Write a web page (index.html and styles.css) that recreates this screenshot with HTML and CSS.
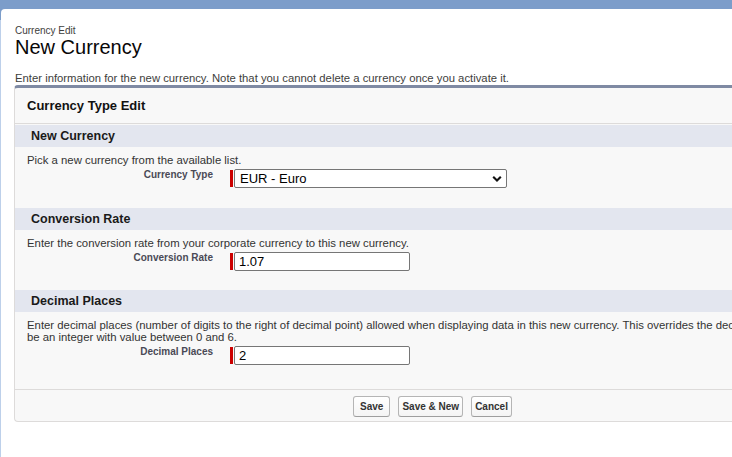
FILE: index.html
```html
<!DOCTYPE html>
<html lang="en">
<head>
<meta charset="utf-8">
<title>New Currency</title>
<link rel="stylesheet" href="styles.css">
</head>
<body>
<div class="panel">
  <div class="page-head">
    <div class="crumb">Currency Edit</div>
    <h1 class="title">New Currency</h1>
  </div>
  <p class="intro">Enter information for the new currency. Note that you cannot delete a currency once you activate it.</p>
  <div class="block">
    <div class="block-head">Currency Type Edit</div>

    <div class="sec-head">New Currency</div>
    <div class="sec-body">
      <div class="sec-text">Pick a new currency from the available list.</div>
      <div class="row">
        <div class="label">Currency Type</div>
        <div class="field">
          <span class="req"></span>
          <div class="select">
            <span class="select-val">EUR - Euro</span>
            <svg class="chev" width="10" height="8" viewBox="0 0 10 8"><path d="M1.2 1.8 L5 5.6 L8.8 1.8" fill="none" stroke="#111" stroke-width="2.1"/></svg>
          </div>
        </div>
      </div>
    </div>

    <div class="sec-head">Conversion Rate</div>
    <div class="sec-body">
      <div class="sec-text">Enter the conversion rate from your corporate currency to this new currency.</div>
      <div class="row">
        <div class="label">Conversion Rate</div>
        <div class="field">
          <span class="req"></span>
          <div class="input">1.07</div>
        </div>
      </div>
    </div>

    <div class="sec-head">Decimal Places</div>
    <div class="sec-body sec-last">
      <div class="sec-text">Enter decimal places (number of digits to the right of decimal point) allowed when displaying data in this new currency. This overrides the decimal places setting for your corporate currency. The value must<br>be an integer with value between 0 and 6.</div>
      <div class="row">
        <div class="label">Decimal Places</div>
        <div class="field">
          <span class="req"></span>
          <div class="input">2</div>
        </div>
      </div>
    </div>

    <div class="foot">
      <button class="btn btn-save">Save</button>
      <button class="btn">Save &amp; New</button>
      <button class="btn">Cancel</button>
    </div>
  </div>
</div>
</body>
</html>
```
FILE: styles.css
```css
html, body {
  margin: 0;
  padding: 0;
}
body {
  width: 732px;
  height: 457px;
  overflow: hidden;
  background: linear-gradient(#7c9dca 0, #7c9dca 20px, #bdd0ea 20px);
  font-family: "Liberation Sans", Arial, sans-serif;
  color: #333;
}
.panel {
  margin: 9px 0 0 1px;
  width: 900px;
  height: 460px;
  background: #fff;
  border-top-left-radius: 4px;
  padding: 16px 0 0 13px;
  box-sizing: border-box;
}
.page-head {
  padding-left: 1px;
}
.crumb {
  font-size: 10px;
  line-height: 12px;
  color: #3e3e3c;
}
.title {
  margin: 0;
  font-size: 20px;
  line-height: 20px;
  font-weight: normal;
  color: #080707;
}
.intro {
  margin: 13.5px 0 0.5px 1px;
  font-size: 11.3px;
  line-height: 14px;
  color: #3e3e3c;
  white-space: nowrap;
}
.block {
  width: 836px;
  box-sizing: border-box;
  background: #f8f8f8;
  border-top: 3px solid #7f8aa3;
  border-left: 1px solid #dddbda;
  border-bottom: 1px solid #dddbda;
  border-radius: 4px;
}
.block-head {
  height: 35px;
  line-height: 35px;
  padding-left: 12px;
  font-size: 13px;
  font-weight: bold;
  color: #111;
  border-bottom: 1px solid #dddbda;
}
.sec-head {
  margin-top: 1px;
  height: 22px;
  line-height: 22px;
  padding-left: 16px;
  background: #e3e6ef;
  font-size: 12.5px;
  font-weight: bold;
  color: #1a1a1a;
}
.sec-body {
  padding: 7px 0 18.5px 12px;
}
.sec-last {
  padding-bottom: 24px;
}
.sec-text {
  font-size: 11.35px;
  line-height: 12px;
  color: #333;
  white-space: nowrap;
}
.row {
  margin-top: 3px;
  display: grid;
  grid-template-columns: 186px auto;
  column-gap: 17px;
  margin-left: -12px;
  padding-left: 12px;
}
.label {
  text-align: right;
  font-size: 10px;
  line-height: 12px;
  font-weight: bold;
  color: #4a4a56;
}
.field {
  display: flex;
  align-items: stretch;
}
.req {
  width: 3px;
  margin: 1px 1px 1px 0;
  background: #c00;
}
.select {
  box-sizing: border-box;
  width: 273px;
  height: 19px;
  border: 1px solid #767676;
  border-radius: 2px;
  background: #fff;
  display: flex;
  align-items: center;
  justify-content: space-between;
  padding: 0 4px 0 5px;
  font-size: 13px;
  color: #000;
}
.chev {
  display: block;
}
.input {
  box-sizing: border-box;
  width: 176px;
  height: 19px;
  border: 1px solid #767676;
  border-radius: 2px;
  background: #fff;
  padding: 0 4px;
  font-size: 13px;
  line-height: 17px;
  color: #000;
}
.foot {
  border-top: 1px solid #dddbda;
  padding: 6px 0 4px;
  display: flex;
  justify-content: center;
  gap: 8px;
}
.btn {
  font-family: "Liberation Sans", Arial, sans-serif;
  height: 21px;
  padding: 0 3px;
  margin: 0;
  font-size: 10px;
  font-weight: bold;
  color: #333;
  background: linear-gradient(#ffffff, #f4f4f4);
  border: 1px solid #b5b5b5;
  border-bottom-color: #9e9e9e;
  border-radius: 3px;
}
.btn-save {
  padding: 0 6px;
}
```
